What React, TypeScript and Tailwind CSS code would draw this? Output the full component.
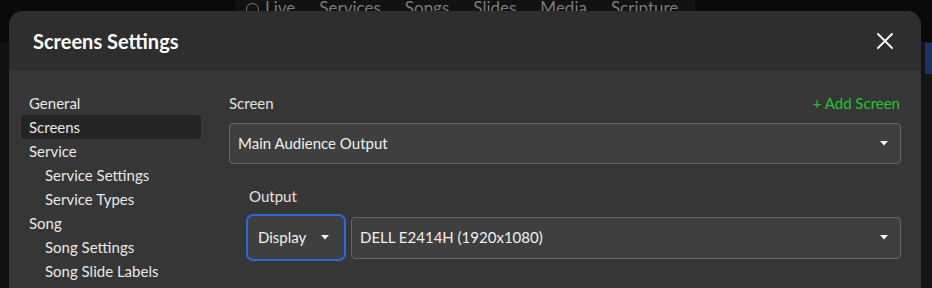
import type { JSX } from "react";

const NAV_ITEMS = ["Services", "Songs", "Slides", "Media", "Scripture"];

type NavEntry = { label: string; indent?: boolean; active?: boolean };

const SIDEBAR: NavEntry[] = [
  { label: "General" },
  { label: "Screens", active: true },
  { label: "Service" },
  { label: "Service Settings", indent: true },
  { label: "Service Types", indent: true },
  { label: "Song" },
  { label: "Song Settings", indent: true },
  { label: "Song Slide Labels", indent: true },
];

function Caret(): JSX.Element {
  return (
    <svg viewBox="0 0 8 5" aria-hidden="true" className="h-[5px] w-[8px] shrink-0">
      <path d="M0 0h8L4 4.5z" fill="#f2f2f2" />
    </svg>
  );
}

function CloseIcon(): JSX.Element {
  return (
    <svg viewBox="0 0 16 16" aria-hidden="true" className="h-4 w-4">
      <path d="M1 1l14 14M15 1L1 15" stroke="#fff" strokeWidth="1.8" strokeLinecap="round" fill="none" />
    </svg>
  );
}

function Backdrop(): JSX.Element {
  return (
    <div className="absolute inset-0 flex flex-col">
      <div className="flex h-[42px] bg-[#090909]">
        <div className="w-[235px]" />
        <div className="flex w-[460px] items-start gap-[24px] overflow-hidden bg-[#121212] pl-[11px] text-[17px] leading-[22px] text-[#7a7a7a]">
          <div className="-mt-[3px] flex items-center gap-[6px]">
            <span className="mt-[2px] h-[13px] w-[13px] rounded-full border border-[#7a7a7a]" />
            <span>Live</span>
          </div>
          {NAV_ITEMS.map((item) => (
            <span key={item} className="-mt-[3px]">
              {item}
            </span>
          ))}
        </div>
        <div className="flex-1" />
      </div>
      <div className="flex flex-1">
        <div className="w-[9px] bg-[#121212]" />
        <div className="flex-1" />
        <div className="flex w-[11px] flex-col bg-[#151515] pl-[4px]">
          <div className="mt-[1px] h-[31px] bg-[#1b3363]" />
        </div>
      </div>
    </div>
  );
}

export default function App(): JSX.Element {
  return (
    <div
      className="relative h-[288px] w-[932px] overflow-hidden bg-[#0a0a0a]"
      style={{ fontFamily: "Lato, 'Noto Sans', sans-serif" }}
    >
      <Backdrop />

      <div className="absolute left-[9px] top-[11px] w-[912px] overflow-hidden rounded-t-[14px] bg-[#363636]">
        <header className="flex h-[60px] items-center justify-between bg-[#2e2e2e] pl-6 pr-[28px]">
          <h1 className="text-[20px] font-bold text-white">Screens Settings</h1>
          <CloseIcon />
        </header>

        <div className="flex pb-10 pt-5">
          <nav className="ml-3 flex w-[180px] flex-col text-[15px] leading-6 text-[#e8e8e8]">
            {SIDEBAR.map((item) => (
              <div
                key={item.label}
                className={`${item.indent ? "pl-6" : "pl-2"} ${item.active ? "rounded bg-[#242424]" : ""}`}
              >
                {item.label}
              </div>
            ))}
          </nav>

          <section className="ml-7 mr-5 flex flex-1 flex-col">
            <div className="flex items-center justify-between text-[15px] leading-6">
              <span className="text-[#e2e2e2]">Screen</span>
              <span className="pr-px text-[#22c32e]">+ Add Screen</span>
            </div>

            <div className="mt-2 flex h-[41px] items-center justify-between rounded border border-[#666] bg-[#3f3f3f] pl-2 pr-3 text-[15px] text-[#f0f0f0]">
              <span>Main Audience Output</span>
              <Caret />
            </div>

            <div className="mt-5 pl-5">
              <div className="text-[15px] leading-6 text-[#e2e2e2]">Output</div>
              <div className="-ml-[3px] mt-[6px] flex items-center gap-[5px]">
                <div className="flex h-[47px] w-[100px] items-center justify-between rounded-[7px] border-2 border-[#2a67e0] bg-[#3f3f3f] pl-[10px] pr-[15px] text-[15px] text-[#f0f0f0]">
                  <span>Display</span>
                  <Caret />
                </div>
                <div className="flex h-[42px] flex-1 items-center justify-between rounded border border-[#666] bg-[#3f3f3f] pl-2 pr-3 text-[15px] text-[#f0f0f0]">
                  <span>DELL E2414H (1920x1080)</span>
                  <Caret />
                </div>
              </div>
            </div>
          </section>
        </div>
      </div>
    </div>
  );
}
